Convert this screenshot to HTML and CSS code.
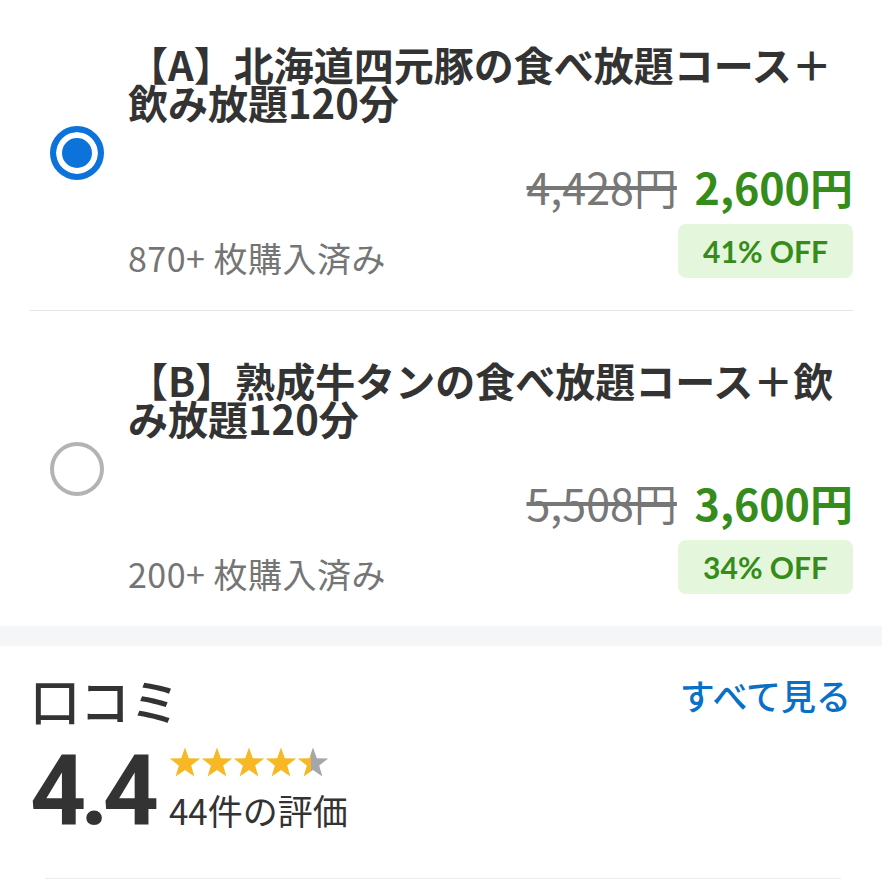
FILE: index.html
```html
<!DOCTYPE html>
<html lang="ja">
<head>
    <meta charset="UTF-8">
    <meta name="viewport" content="width=device-width, initial-scale=1.0">
    <title>コース選択</title>
    <link rel="stylesheet" href="styles.css">
</head>
<body>
    <div class="options">
        <div class="option first">
            <span class="radio checked"></span>
            <div class="option-body">
                <div class="option-title">【A】北海道四元豚の食べ放題コース＋飲み放題120分</div>
                <div class="price-line">
                    <span class="old-price">4,428円</span>
                    <span class="new-price">2,600円</span>
                </div>
                <div class="meta-line">
                    <span class="sold">870+ 枚購入済み</span>
                    <span class="badge">41% OFF</span>
                </div>
            </div>
        </div>
        <div class="option">
            <span class="radio"></span>
            <div class="option-body">
                <div class="option-title">【B】熟成牛タンの食べ放題コース＋飲み放題120分</div>
                <div class="price-line">
                    <span class="old-price">5,508円</span>
                    <span class="new-price">3,600円</span>
                </div>
                <div class="meta-line">
                    <span class="sold">200+ 枚購入済み</span>
                    <span class="badge">34% OFF</span>
                </div>
            </div>
        </div>
    </div>

    <div class="spacer"></div>

    <div class="reviews">
        <div class="reviews-head">
            <h2>口コミ</h2>
            <a class="see-all" href="#">すべて見る</a>
        </div>
        <div class="rating">
            <span class="score">4.4</span>
            <div class="rating-side">
                <div class="stars">
                    <svg width="160" height="30" viewBox="0 0 160 30">
                        <defs>
                            <path id="star" d="M16 0.5L19.82 11.24 31.22 11.56 22.18 18.51 25.4 29.44 16 23 6.6 29.44 9.82 18.51 0.78 11.56 12.18 11.24Z"/>
                            <linearGradient id="part">
                                <stop offset="45%" stop-color="#f6b925"/>
                                <stop offset="45%" stop-color="#a3a7ad"/>
                            </linearGradient>
                        </defs>
                        <use href="#star" x="0" fill="#f6b925"/>
                        <use href="#star" x="32" fill="#f6b925"/>
                        <use href="#star" x="64" fill="#f6b925"/>
                        <use href="#star" x="96" fill="#f6b925"/>
                        <use href="#star" x="128" fill="url(#part)"/>
                    </svg>
                </div>
                <div class="count">44件の評価</div>
            </div>
        </div>
        <div class="reviews-line"></div>
    </div>
</body>
</html>
```

FILE: styles.css
```css
body {
    margin: 0;
    background: #fff;
    color: #333;
    font-family: "Noto Sans CJK JP", "Noto Sans", sans-serif;
    overflow: hidden;
}
.options {
    padding: 0 29px 0 30px;
}
.option {
    display: flex;
    align-items: center;
    padding-left: 20px;
    border-bottom: 1px solid #e4e4e4;
}
.option:last-child {
    border-bottom: none;
}
.option.first {
    margin-top: -5px;
}
.radio {
    flex: none;
    width: 54px;
    height: 54px;
    box-sizing: border-box;
    border-radius: 50%;
    border: 4px solid #b3b3b3;
    margin-right: 24px;
}
.radio.checked {
    border: 6px solid #0b73d9;
    background: #0b73d9;
    box-shadow: inset 0 0 0 6px #fff;
}
.option-body {
    flex: 1;
    min-width: 0;
    padding: 50px 0 32px;
}
.option-title {
    font-size: 40px;
    line-height: 38px;
    font-weight: bold;
    color: #333;
}
.price-line {
    margin-top: 40px;
    text-align: right;
    font-size: 43px;
    line-height: 50px;
}
.old-price {
    color: #777;
    text-decoration: line-through;
    margin-right: 8px;
}
.new-price {
    color: #358c1a;
    font-weight: bold;
}
.meta-line {
    display: flex;
    justify-content: space-between;
    align-items: flex-end;
    margin-top: 13px;
}
.sold {
    font-size: 34px;
    line-height: 40px;
    letter-spacing: 0.5px;
    color: #757575;
}
.badge {
    font-family: Lato, "Noto Sans CJK JP", sans-serif;
    font-size: 30px;
    font-weight: bold;
    line-height: 54px;
    padding: 0 25px;
    border-radius: 8px;
    background: #e4f7dc;
    color: #358c1a;
}
.spacer {
    height: 20px;
    background: #f5f6f8;
}
.reviews {
    padding: 23px 31px 0 30px;
}
.reviews-head {
    display: flex;
    justify-content: space-between;
    align-items: flex-start;
}
.reviews-head h2 {
    margin: 0;
    font-size: 50px;
    line-height: 60px;
    font-weight: 500;
    color: #333;
}
.see-all {
    font-size: 35px;
    line-height: 36px;
    font-weight: 500;
    color: #0a70c6;
    text-decoration: none;
    margin-top: 8px;
}
.rating {
    display: flex;
    align-items: flex-end;
    margin-top: 18px;
}
.score {
    font-family: Roboto, "Liberation Sans", sans-serif;
    font-size: 98px;
    line-height: 80px;
    font-weight: bold;
    letter-spacing: -6px;
    color: #333;
    margin-right: 16px;
}
.stars {
    height: 30px;
    margin-bottom: 12px;
}
.stars svg {
    display: block;
}
.count {
    font-size: 35px;
    line-height: 42px;
    color: #333;
}
.reviews-line {
    margin: 47px 10px 0 15px;
    border-top: 1px solid #ececec;
}
```
